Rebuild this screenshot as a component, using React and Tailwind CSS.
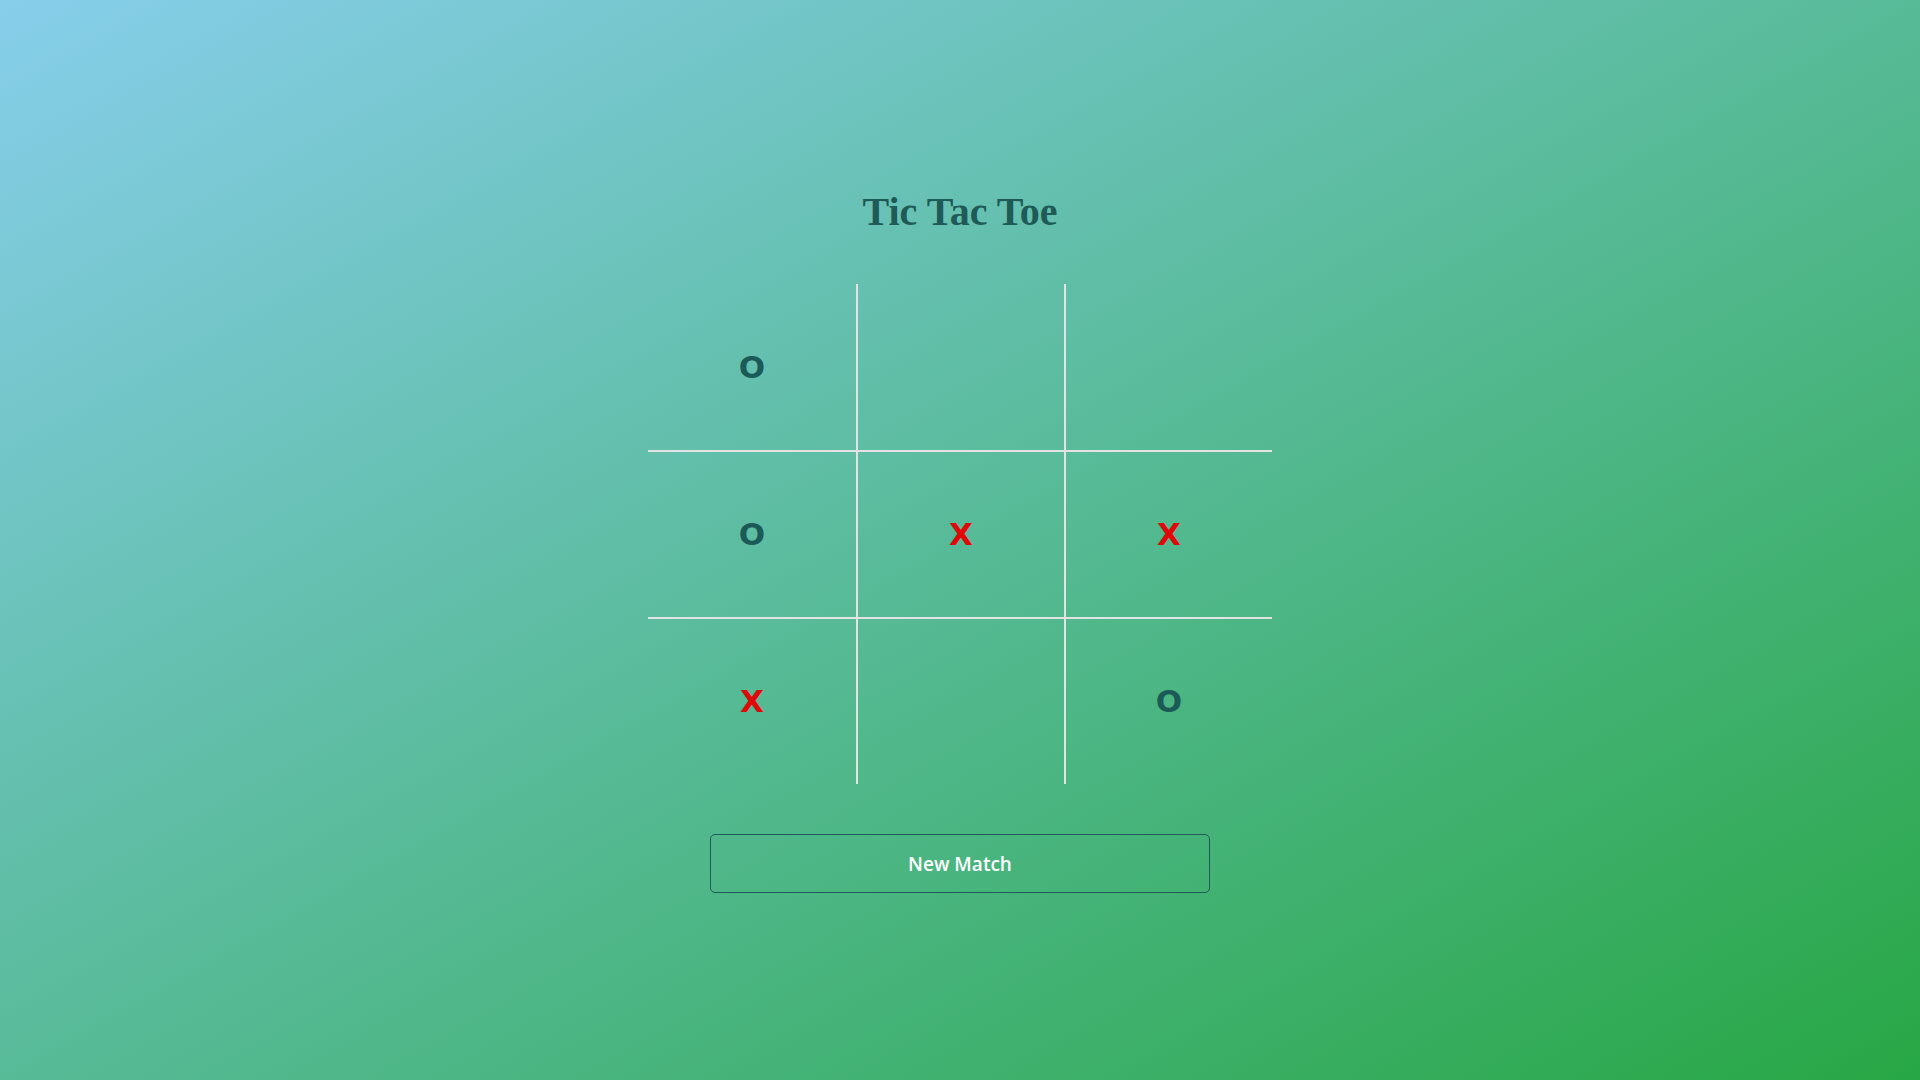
import React, { useState } from "react";

const start = ["O", "", "", "O", "X", "X", "X", "", "O"];

export default function App() {
  const [board, setBoard] = useState(start);

  const play = (i) => {
    if (board[i]) return;
    const count = board.filter(Boolean).length;
    const next = [...board];
    next[i] = count % 2 === 0 ? "X" : "O";
    setBoard(next);
  };

  return (
    <div className="min-h-screen w-full bg-[linear-gradient(to_bottom_right,#87ceeb,#28a745)] flex flex-col items-center pt-[188px]">
      <h1 className="font-['Liberation_Serif',serif] font-bold text-[40px] leading-[48px] text-[#1f5a57] mb-[48px]">
        Tic Tac Toe
      </h1>

      <div className="grid grid-cols-[208px_208px_208px] grid-rows-[166px_167px_167px]">
        {board.map((v, i) => (
          <button
            key={i}
            onClick={() => play(i)}
            className={
              "flex items-center justify-center border-[#e3e3e3] font-['DejaVu_Sans',sans-serif] font-bold text-[31px] leading-none " +
              (i % 3 !== 0 ? "border-l-2 " : "") +
              (i >= 3 ? "border-t-2 " : "") +
              (v === "X" ? "text-[#e00808]" : "text-[#1c5a58]")
            }
          >
            {v}
          </button>
        ))}
      </div>

      <button
        onClick={() => setBoard(Array(9).fill(""))}
        className="mt-[50px] w-[500px] h-[59px] rounded-[5px] border border-[#1e5a5a] text-white font-['Open_Sans',sans-serif] font-semibold text-[19px] pt-[2px]"
      >
        New Match
      </button>
    </div>
  );
}
